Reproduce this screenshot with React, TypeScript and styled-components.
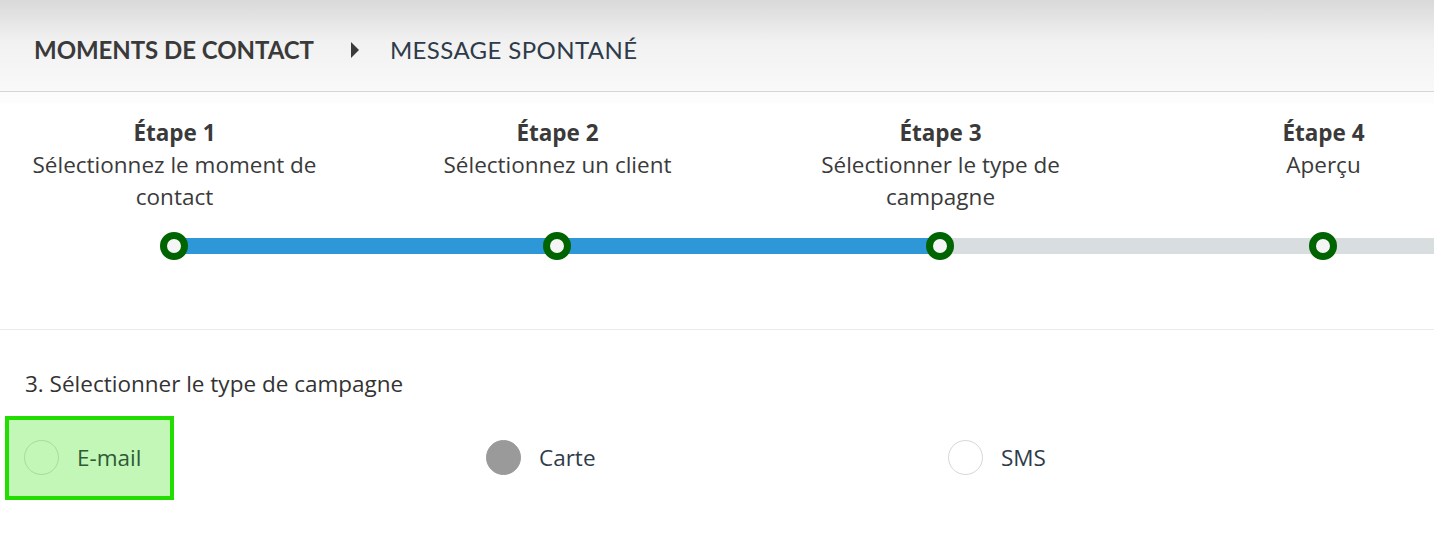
import React from "react";
import styled, { createGlobalStyle } from "styled-components";

const Global = createGlobalStyle`
  html, body { margin: 0; padding: 0; background: #ffffff; }
  body { font-family: "Open Sans", "Liberation Sans", sans-serif; color: #333; overflow: hidden; }
  * { box-sizing: border-box; }
`;

const Page = styled.div`
  width: 1434px;
  height: 544px;
  overflow: hidden;
  background: #fff;
`;

const Header = styled.header`
  height: 92px;
  background: linear-gradient(to bottom, #d9d9d9 0%, #f1f1f1 45%, #f9f9f9 100%);
  border-bottom: 1px solid #d6d6d6;
  display: flex;
  align-items: center;
  padding: 8px 0 0 34px;
  font-family: Lato, "Open Sans", sans-serif;
  font-size: 24px;
`;

const Crumb = styled.span<{ $strong?: boolean }>`
  font-weight: ${(p) => (p.$strong ? 700 : 400)};
  color: ${(p) => (p.$strong ? "#3a3a3a" : "#2e3b4a")};
  letter-spacing: ${(p) => (p.$strong ? "-0.05px" : "0.4px")};
`;

const Caret = styled.span`
  width: 0;
  height: 0;
  border-top: 8px solid transparent;
  border-bottom: 8px solid transparent;
  border-left: 8px solid #3a3a3a;
  margin: 0 31px 0 37px;
`;

const Band = styled.div`
  height: 11px;
  background: #fcfcfc;
`;

const Steps = styled.div`
  display: flex;
  margin-left: -17px;
  height: 227px;
  border-bottom: 1px solid #ebebeb;
`;

const Step = styled.div`
  flex: 0 0 383px;
  display: flex;
  flex-direction: column;
  align-items: center;
  text-align: center;
  padding-top: 14px;
  position: relative;
`;

const StepTitle = styled.div`
  font-weight: 700;
  font-size: 22.5px;
  line-height: 32px;
  color: #3a3a3a;
`;

const StepText = styled.div`
  font-size: 22.5px;
  line-height: 32px;
  color: #3a3a3a;
  width: 310px;
  height: 64px;
`;

const Track = styled.div`
  align-self: stretch;
  height: 28px;
  margin-top: 19px;
  position: relative;
`;

const Bar = styled.div<{ $done: boolean }>`
  position: absolute;
  left: 50%;
  width: 100%;
  top: 6px;
  height: 16px;
  background: ${(p) => (p.$done ? "#2e97d8" : "#d8dde0")};
`;

const Dot = styled.div`
  position: absolute;
  left: 50%;
  top: 0;
  width: 28px;
  height: 28px;
  margin-left: -15px;
  border-radius: 50%;
  border: 7px solid #006400;
  background: #f5f5f5;
`;

const Section = styled.section`
  padding: 40px 0 0 25px;
`;

const SectionTitle = styled.div`
  font-size: 22.5px;
  line-height: 28px;
  color: #333;
`;

const Options = styled.div`
  display: flex;
  margin: 18px 0 0 -20px;
`;

const Option = styled.label`
  flex: 0 0 462px;
  display: flex;
  align-items: center;
  height: 84px;
  padding-left: 19px;
  padding-bottom: 2px;
  font-size: 22.5px;
  color: #2e3b4a;
`;

const ActiveBox = styled.div`
  display: flex;
  align-items: center;
  height: 84px;
  width: 169px;
  margin-left: -19px;
  margin-bottom: -2px;
  padding-left: 15px;
  padding-bottom: 2px;
  background: #c3f7b8;
  border: 4px solid #22dd00;
  color: #2f5a36;
`;

const Radio = styled.span<{ $variant: "ghost" | "filled" | "empty" }>`
  width: 35px;
  height: 35px;
  border-radius: 50%;
  margin-right: 18px;
  flex: 0 0 auto;
  background: ${(p) =>
    p.$variant === "filled" ? "#9a9a9a" : p.$variant === "ghost" ? "transparent" : "#fff"};
  border: 1px solid
    ${(p) => (p.$variant === "filled" ? "#9a9a9a" : p.$variant === "ghost" ? "#a9d9a0" : "#d4d8d8")};
`;

const steps = [
  { title: "Étape 1", text: "Sélectionnez le moment de contact", done: true },
  { title: "Étape 2", text: "Sélectionnez un client", done: true },
  { title: "Étape 3", text: "Sélectionner le type de campagne", done: false },
  { title: "Étape 4", text: "Aperçu", done: false },
];

export default function App() {
  return (
    <Page>
      <Global />
      <Header>
        <Crumb $strong>MOMENTS DE CONTACT</Crumb>
        <Caret />
        <Crumb>MESSAGE SPONTANÉ</Crumb>
      </Header>
      <Band />
      <Steps>
        {steps.map((s) => (
          <Step key={s.title}>
            <StepTitle>{s.title}</StepTitle>
            <StepText>{s.text}</StepText>
            <Track>
              <Bar $done={s.done} />
              <Dot />
            </Track>
          </Step>
        ))}
      </Steps>
      <Section>
        <SectionTitle>3. Sélectionner le type de campagne</SectionTitle>
        <Options>
          <Option>
            <ActiveBox>
              <Radio $variant="ghost" />
              E-mail
            </ActiveBox>
          </Option>
          <Option>
            <Radio $variant="filled" />
            Carte
          </Option>
          <Option>
            <Radio $variant="empty" />
            SMS
          </Option>
        </Options>
      </Section>
    </Page>
  );
}
